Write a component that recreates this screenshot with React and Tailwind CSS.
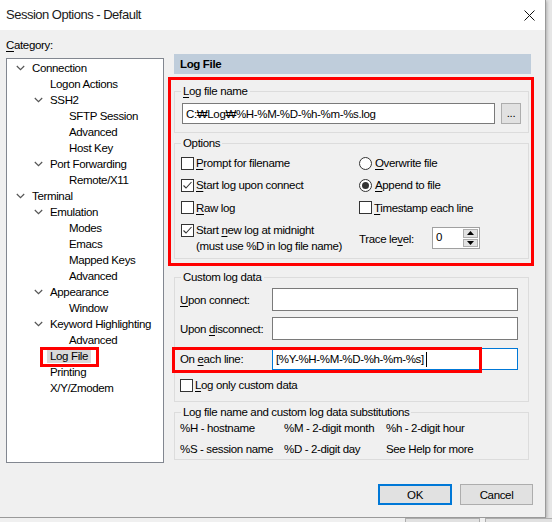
import React from "react";

const F = "font-['Liberation_Sans','Noto_Sans_CJK_KR',sans-serif] tracking-[-0.35px]";

function U({ children }) {
  return <span className="underline underline-offset-[2px] decoration-[1px]">{children}</span>;
}

function Check({ checked }) {
  return (
    <span className="w-[13px] h-[13px] border border-[#333333] bg-white flex items-center justify-center shrink-0">
      {checked && (
        <svg width="11" height="11" viewBox="0 0 11 11">
          <path d="M1.5 5.5 L4 8 L9.5 2" stroke="#333333" strokeWidth="1.1" fill="none" />
        </svg>
      )}
    </span>
  );
}

function Radio({ checked }) {
  return (
    <span className="w-[13px] h-[13px] rounded-full border border-[#333333] bg-white flex items-center justify-center shrink-0">
      {checked && <span className="w-[7px] h-[7px] rounded-full bg-[#333333]" />}
    </span>
  );
}

function Chevron() {
  return (
    <span className="w-[16px] flex items-center justify-start shrink-0">
      <svg width="9" height="6" viewBox="0 0 9 6">
        <path d="M0.8 1 L4.5 4.6 L8.2 1" stroke="#555555" strokeWidth="1.2" fill="none" />
      </svg>
    </span>
  );
}

function Group({ title, className, children }) {
  return (
    <div className={"relative border border-[#dcdcdc] " + className}>
      <span className="absolute -top-[9px] left-[6px] bg-[#f0f0f0] px-[2px] leading-[16px] whitespace-nowrap">{title}</span>
      {children}
    </div>
  );
}

const tree = [
  ["pl-[9px]", "Connection", true],
  ["pl-[43px]", "Logon Actions"],
  ["pl-[27px]", "SSH2", true],
  ["pl-[62px]", "SFTP Session"],
  ["pl-[62px]", "Advanced"],
  ["pl-[62px]", "Host Key"],
  ["pl-[27px]", "Port Forwarding", true],
  ["pl-[62px]", "Remote/X11"],
  ["pl-[9px]", "Terminal", true],
  ["pl-[27px]", "Emulation", true],
  ["pl-[62px]", "Modes"],
  ["pl-[62px]", "Emacs"],
  ["pl-[62px]", "Mapped Keys"],
  ["pl-[62px]", "Advanced"],
  ["pl-[27px]", "Appearance", true],
  ["pl-[62px]", "Window"],
  ["pl-[27px]", "Keyword Highlighting", true],
  ["pl-[62px]", "Advanced"],
  ["pl-[40px]", "Log File", false, true],
  ["pl-[43px]", "Printing"],
  ["pl-[43px]", "X/Y/Zmodem"],
];

export default function App() {
  return (
    <div className={"w-[552px] h-[522px] relative overflow-hidden bg-[#e6e6e6] text-[11.5px] text-black " + F}>
      <div className="w-[546px] h-[518px] bg-[#f0f0f0] border-r border-b border-[#9a9a9a] flex flex-col shadow-[1px_1px_3px_rgba(0,0,0,0.25)]">
        {/* title bar */}
        <div className="h-[30px] bg-white flex items-center justify-between pl-[6px] pr-[10px] shrink-0">
          <span className="text-[13px] tracking-[-0.5px] leading-[18px] text-[#1a1a1a]">Session Options - Default</span>
          <svg width="11" height="11" viewBox="0 0 11 11">
            <path d="M0.5 0.5 L10.5 10.5 M10.5 0.5 L0.5 10.5" stroke="#111" strokeWidth="1" />
          </svg>
        </div>
        {/* body */}
        <div className="flex flex-1">
          {/* left */}
          <div className="ml-[6px] w-[158px] flex flex-col">
            <div className="mt-[7px] h-[16px] leading-[16px]">
              <U>C</U>ategory:
            </div>
            <div className="mt-[5px] h-[405px] bg-white border border-[#828790] pt-[1px] relative">
              {tree.map(([pl, label, chev, sel], i) => (
                <div key={i} className={"h-[16px] flex items-center leading-[16px] whitespace-nowrap relative " + pl}>
                  {chev && <Chevron />}
                  {sel ? (
                    <>
                      <span className="bg-[#d9d9d9] px-[3px] h-[13px] leading-[13px]">{label}</span>
                      <span className="absolute left-[33px] -top-[1px] w-[59px] h-[20px] border-[3px] border-[#ff0000]" />
                    </>
                  ) : (
                    <span>{label}</span>
                  )}
                </div>
              ))}
            </div>
          </div>
          {/* right */}
          <div className="ml-[4px] w-[366px] flex flex-col">
            <div className="mt-[24px] ml-[6px] w-[357px] h-[20px] bg-[#bfcddb] flex items-center pl-[6px] font-bold leading-[16px]">
              Log File
            </div>
            <div className="mt-[3px] h-[189px] border-[3px] border-[#ff0000] pt-[11px] pl-[3px]">
              <Group title={<><U>L</U>og file name</>} className="w-[355px] h-[42px] pt-[11px] pl-[7px] flex items-start">
                <div className="w-[313px] h-[21px] bg-white border border-[#7a7a7a] flex items-center pl-[3px] leading-[16px] whitespace-nowrap">
                  C:₩Log₩%H-%M-%D-%h-%m-%s.log
                </div>
                <div className="ml-[6px] w-[20px] h-[21px] bg-[#e1e1e1] border border-[#adadad] flex items-center justify-center leading-[10px] pb-[2px]">
                  ...
                </div>
              </Group>
              <Group title="Options" className="mt-[10px] w-[355px] h-[116px] pt-[8px] pl-[6px] flex">
                <div className="w-[178px] flex flex-col">
                  <div className="h-[22px] flex items-center gap-[2px]">
                    <Check />
                    <span className="leading-[16px]"><U>P</U>rompt for filename</span>
                  </div>
                  <div className="h-[22px] flex items-center gap-[2px]">
                    <Check checked />
                    <span className="leading-[16px]"><U>S</U>tart log upon connect</span>
                  </div>
                  <div className="h-[23px] flex items-center gap-[2px]">
                    <Check />
                    <span className="leading-[16px]"><U>R</U>aw log</span>
                  </div>
                  <div className="pt-[3px] flex items-start gap-[2px]">
                    <span className="mt-[2px]"><Check checked /></span>
                    <span className="leading-[16px] whitespace-nowrap">
                      Start <U>n</U>ew log at midnight
                      <br />
                      (must use %D in log file name)
                    </span>
                  </div>
                </div>
                <div className="flex flex-col">
                  <div className="h-[22px] flex items-center gap-[3px]">
                    <Radio />
                    <span className="leading-[16px]"><U>O</U>verwrite file</span>
                  </div>
                  <div className="h-[22px] flex items-center gap-[3px]">
                    <Radio checked />
                    <span className="leading-[16px]"><U>A</U>ppend to file</span>
                  </div>
                  <div className="h-[23px] flex items-center gap-[2px]">
                    <Check />
                    <span className="leading-[16px]"><U>T</U>imestamp each line</span>
                  </div>
                  <div className="mt-[8px] h-[22px] flex items-center">
                    <span className="leading-[16px] w-[73px] pt-[2px]">Trace le<U>v</U>el:</span>
                    <div className="w-[48px] h-[22px] border border-[#a0a0a0] bg-white flex">
                      <span className="flex-1 pl-[3px] leading-[16px] pt-[1px]">0</span>
                      <div className="w-[16px] flex flex-col gap-[1px] p-[1px] pl-0">
                        <div className="flex-1 bg-[#e1e1e1] border border-[#adadad] flex items-center justify-center">
                          <svg width="7" height="4" viewBox="0 0 7 4"><path d="M0 4 L3.5 0 L7 4 Z" fill="#000" /></svg>
                        </div>
                        <div className="flex-1 bg-[#e1e1e1] border border-[#adadad] flex items-center justify-center">
                          <svg width="7" height="4" viewBox="0 0 7 4"><path d="M0 0 L3.5 4 L7 0 Z" fill="#000" /></svg>
                        </div>
                      </div>
                    </div>
                  </div>
                </div>
              </Group>
            </div>
            <Group title="Custom log data" className="mt-[11px] ml-[6px] w-[355px] h-[125px] pt-[10px] pl-[5px]">
              <div className="h-[23px] flex items-center">
                <span className="w-[92px] leading-[16px] whitespace-nowrap"><U>U</U>pon connect:</span>
                <div className="w-[246px] h-[23px] bg-white border border-[#7a7a7a]" />
              </div>
              <div className="mt-[6px] h-[23px] flex items-center">
                <span className="w-[92px] leading-[16px] whitespace-nowrap">Upon <U>d</U>isconnect:</span>
                <div className="w-[246px] h-[23px] bg-white border border-[#7a7a7a]" />
              </div>
              <div className="mt-[8px] h-[22px] flex items-center">
                <span className="w-[92px] leading-[16px] whitespace-nowrap">On <U>e</U>ach line:</span>
                <div className="w-[246px] h-[22px] bg-white border border-[#0078d7] flex items-center pl-[3px] leading-[16px] whitespace-nowrap">
                  [%Y-%H-%M-%D-%h-%m-%s]
                  <span className="ml-[2px] w-[1px] h-[15px] bg-black" />
                </div>
              </div>
              <div className="mt-[7px] h-[16px] flex items-center gap-[2px]">
                <Check />
                <span className="leading-[16px]"><U>L</U>og only custom data</span>
              </div>
              <span className="absolute left-[-3px] top-[69px] w-[310px] h-[26px] border-[3px] border-[#ff0000]" />
            </Group>
            <Group title="Log file name and custom log data substitutions" className="mt-[10px] ml-[6px] w-[355px] h-[48px] pt-[7px] pl-[5px]">
              <div className="grid grid-cols-[104px_102px_1fr] leading-[16px] whitespace-nowrap gap-y-[5px]">
                <span>%H - hostname</span>
                <span>%M - 2-digit month</span>
                <span>%h - 2-digit hour</span>
                <span>%S - session name</span>
                <span>%D - 2-digit day</span>
                <span>See Help for more</span>
              </div>
            </Group>
            <div className="mt-[24px] flex justify-end gap-[8px] pr-[1px]">
              <div className="w-[74px] h-[21px] bg-[#e1e1e1] border-2 border-[#0078d7] flex items-center justify-center leading-[16px]">OK</div>
              <div className="w-[73px] h-[21px] bg-[#e1e1e1] border border-[#adadad] flex items-center justify-center leading-[16px]">Cancel</div>
            </div>
          </div>
        </div>
      </div>
      {/* window underneath, peeking out at the bottom */}
      <div className="absolute left-0 top-[518px] w-[552px] h-[4px] overflow-hidden bg-[#f0f0f0]">
        <div className="absolute left-[405px] top-0 w-[75px] h-[21px] border border-[#adadad] bg-[#e1e1e1]" />
        <div className="absolute left-[485px] top-0 w-[75px] h-[21px] border border-[#adadad] bg-[#e1e1e1]" />
      </div>
    </div>
  );
}
